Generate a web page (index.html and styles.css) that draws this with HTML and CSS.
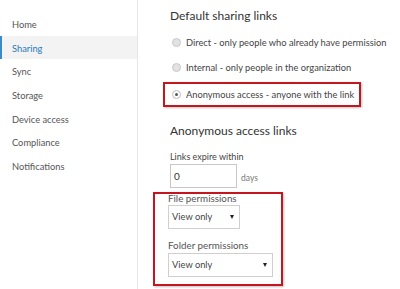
FILE: index.html
```html
<!DOCTYPE html>
<html lang="en">
<head>
    <meta charset="UTF-8">
    <title>Sharing settings</title>
    <link rel="stylesheet" href="styles.css">
</head>
<body>
    <div class="page">
        <div class="sidebar">
            <a href="#" class="item">Home</a>
            <a href="#" class="item active">Sharing</a>
            <a href="#" class="item">Sync</a>
            <a href="#" class="item">Storage</a>
            <a href="#" class="item">Device access</a>
            <a href="#" class="item">Compliance</a>
            <a href="#" class="item">Notifications</a>
        </div>

        <div class="content">
            <h2>Default sharing links</h2>
            <label class="radio first"><span class="dot"></span>Direct - only people who already have permission</label>
            <label class="radio"><span class="dot"></span>Internal - only people in the organization</label>
            <div class="mark mark-radio">
                <label class="radio"><span class="dot checked"></span>Anonymous access - anyone with the link</label>
            </div>

            <h2 class="second">Anonymous access links</h2>
            <div class="field-label">Links expire within</div>
            <div class="expire">
                <div class="textbox">0</div>
                <span class="unit">days</span>
            </div>

            <div class="mark mark-perms">
                <div class="field-label small">File permissions</div>
                <div class="select short">View only<span class="arrow"></span></div>
                <div class="field-label small folder">Folder permissions</div>
                <div class="select long">View only<span class="arrow"></span></div>
            </div>
        </div>
    </div>
</body>
</html>
```

FILE: styles.css
```css
body {
    margin: 0;
    background: #fff;
    font-family: Lato, "Noto Sans", sans-serif;
    color: #444;
}
.page {
    display: flex;
    height: 289px;
    overflow: hidden;
}
.sidebar {
    width: 137px;
    flex-shrink: 0;
    border-right: 1px solid #e6e6e6;
    padding-top: 12px;
    display: flex;
    flex-direction: column;
}
.item {
    height: 23.7px;
    line-height: 26px;
    padding-left: 12px;
    font-size: 9.3px;
    color: #555;
    text-decoration: none;
}
.item.active {
    background: #f3f3f3;
    color: #2a7ab8;
    box-shadow: inset 2px 0 0 #3a8ac8;
}
.content {
    padding-left: 32px;
    padding-top: 6px;
    white-space: nowrap;
}
h2 {
    margin: 0;
    font-size: 12px;
    font-weight: normal;
    line-height: 20px;
    color: #333;
}
.radio {
    display: flex;
    align-items: center;
    height: 25px;
    font-size: 9.3px;
    color: #444;
    padding-left: 2px;
}
.radio.first {
    margin-top: 4px;
}
.dot {
    width: 9px;
    height: 9px;
    border-radius: 50%;
    border: 1px solid #c8c8c8;
    background: #e2e2e2;
    margin-right: 5px;
    box-sizing: border-box;
    position: relative;
    flex-shrink: 0;
}
.dot.checked {
    background: #fff;
    border-color: #bbb;
}
.dot.checked::after {
    content: "";
    position: absolute;
    left: 2px;
    top: 2px;
    width: 3px;
    height: 3px;
    border-radius: 50%;
    background: #555;
}
.mark {
    border: 2px solid #c4161c;
    box-shadow: 1px 1px 2px rgba(0, 0, 0, 0.25);
}
.mark-radio {
    width: 198px;
    height: 25px;
    margin-left: -7px;
    margin-top: 2px;
    padding-left: 5px;
    box-sizing: border-box;
    display: flex;
    align-items: center;
}
.mark-radio .radio {
    height: 21px;
}
.second {
    margin-top: 14px;
}
.field-label {
    font-size: 9px;
    color: #444;
    margin-top: 9px;
    line-height: 14px;
}
.expire {
    display: flex;
    align-items: center;
}
.textbox {
    width: 62px;
    height: 22px;
    border: 1px solid #c8c8c8;
    font-size: 10px;
    line-height: 22px;
    padding-left: 3px;
    color: #333;
}
.unit {
    font-size: 8.5px;
    color: #777;
    margin-left: 4px;
    margin-top: 4px;
}
.mark-perms {
    width: 113px;
    height: 90px;
    margin-left: -17px;
    margin-top: 4px;
    padding-left: 13px;
}
.small {
    margin-top: -1px;
    font-size: 9.8px;
    line-height: 10px;
    color: #555;
}
.select {
    position: relative;
    height: 22px;
    border: 1px solid #cfcfcf;
    font-size: 9.3px;
    line-height: 22px;
    padding-left: 3px;
    margin-top: 2px;
    color: #444;
}
.select.short {
    width: 67px;
}
.select.long {
    width: 100px;
}
.folder {
    margin-top: 11px;
}
.select.long {
    margin-top: 3px;
}
.arrow {
    position: absolute;
    right: 5px;
    top: 9px;
    border-left: 2.5px solid transparent;
    border-right: 2.5px solid transparent;
    border-top: 4px solid #222;
}
```
